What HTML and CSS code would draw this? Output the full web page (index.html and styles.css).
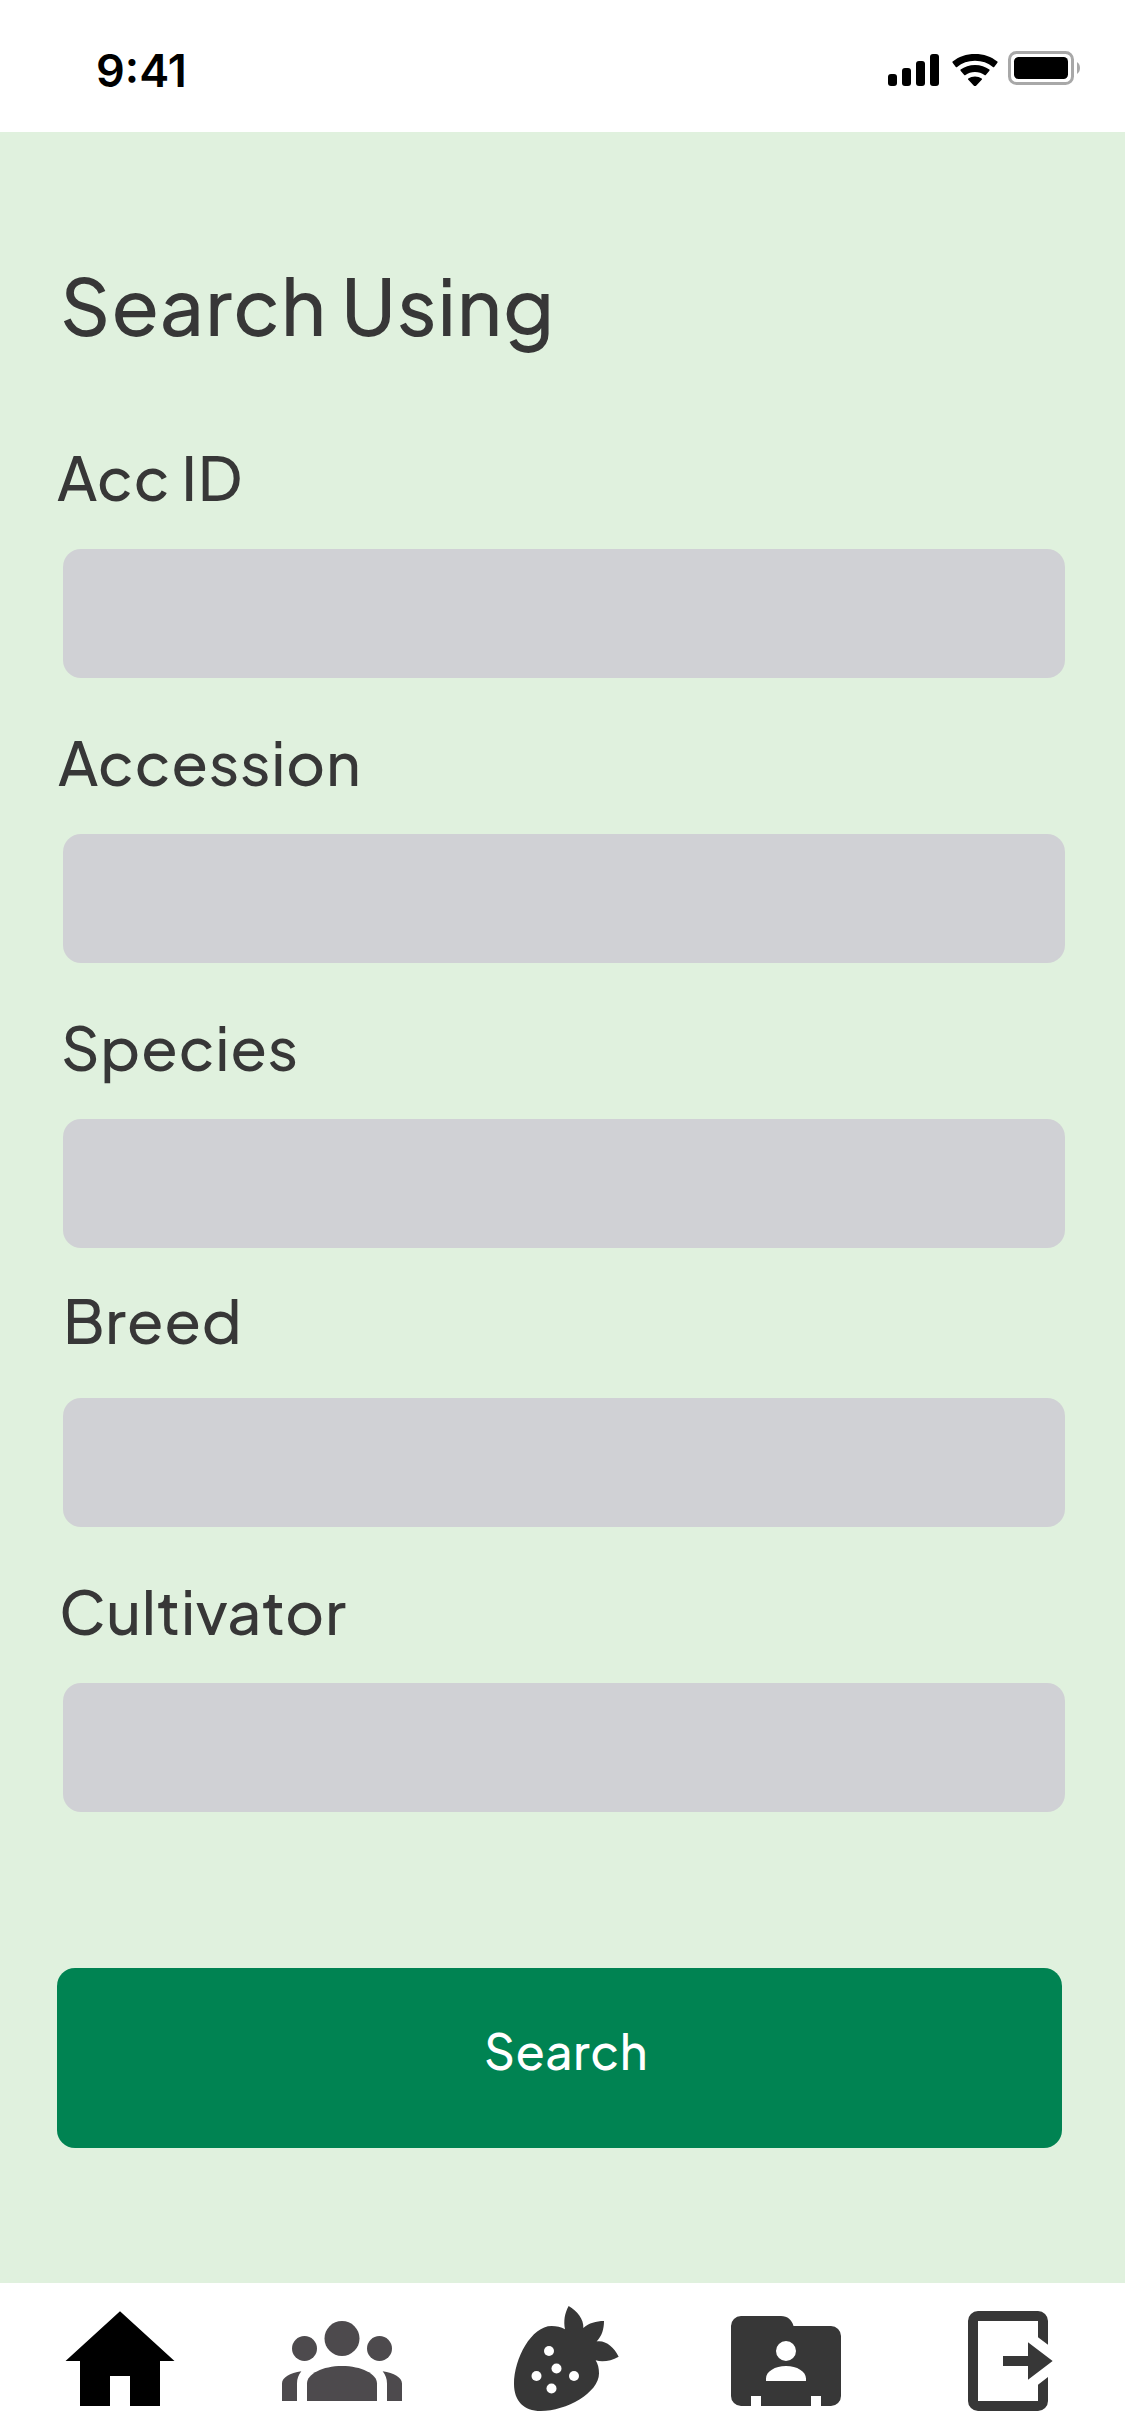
FILE: index.html
```
<!DOCTYPE html>
<html lang="en">
<head>
<meta charset="utf-8">
<title>Search Using</title>
<link rel="stylesheet" href="styles.css">
</head>
<body>
<div class="screen">
  <header class="status-bar">
    <span class="status-time">9:41</span>
    <svg class="status-icons" viewBox="0 0 192 36" aria-hidden="true">
      <rect x="0" y="24" width="9" height="12" rx="3"/>
      <rect x="14" y="18" width="9" height="18" rx="3"/>
      <rect x="28" y="11" width="9" height="25" rx="3"/>
      <rect x="42" y="4" width="9" height="32" rx="3"/>
      <path d="M64.6 12.8a1 1 0 0 1 0-1.2C70.600 6.500 78.300 3.900 87 3.900S103.400 6.500 109.400 11.600a1 1 0 0 1 0 1.200L106.200 17a1 1 0 0 1-1.300 0C100 12.900 94 10.700 87 10.700S74 12.900 69.100 17a1 1 0 0 1-1.300 0z"/>
      <path d="M72.600 20.800a1 1 0 0 1 0-1.200C76.500 16.500 81.500 14.900 87 14.900S97.500 16.500 101.400 19.600a1 1 0 0 1 0 1.200L97.800 25a1 1 0 0 1-1.300 0C93.800 23 90.700 22 87 22S80.200 23 77.500 25a1 1 0 0 1-1.300 0z"/>
      <path d="M80.300 29.800a.8.8 0 0 1 0-1.200C84 25.700 90 25.700 93.700 28.600a.8.8 0 0 1 0 1.200L87.600 36.300a.8.8 0 0 1-1.200 0z"/>
      <rect class="battery-shell" x="121.500" y="2.500" width="63" height="31" rx="7"/>
      <rect x="126" y="7" width="54" height="22" rx="4.500"/>
      <path class="battery-cap" d="M189 12c4 2.500 4 9.500 0 12z"/>
    </svg>
  </header>

  <main class="content">
    <h1 class="title">Search Using</h1>
    <form class="form">
      <div class="field">
        <label class="label" for="acc-id">Acc ID</label>
        <input class="input" id="acc-id" type="text">
      </div>
      <div class="field">
        <label class="label label-accession" for="accession">Accession</label>
        <input class="input" id="accession" type="text">
      </div>
      <div class="field field-species">
        <label class="label label-species" for="species">Species</label>
        <input class="input" id="species" type="text">
      </div>
      <div class="field field-breed">
        <label class="label label-breed" for="breed">Breed</label>
        <input class="input" id="breed" type="text">
      </div>
      <div class="field field-cultivator">
        <label class="label label-cultivator" for="cultivator">Cultivator</label>
        <input class="input" id="cultivator" type="text">
      </div>
      <button class="search-button" type="button">Search</button>
    </form>
  </main>

  <nav class="tab-bar">
    <a class="tab tab-home" aria-label="Home">
      <svg viewBox="0 0 24 24"><path d="M4 21V12H1.100L12 2.050l10.900 9.950H20v9h-6v-6h-4v6z"/></svg>
    </a>
    <a class="tab tab-people" aria-label="People">
      <svg viewBox="0 0 24 24">
        <circle cx="12" cy="7.500" r="3.500"/>
        <circle cx="4.500" cy="9.500" r="2.500"/>
        <circle cx="19.500" cy="9.500" r="2.500"/>
        <path d="M5 20v-3.500C5 14.570 8.130 13 12 13s7 1.570 7 3.500V20z"/>
        <path d="M0 20v-3.500c0-1.160 1.600-2.140 3.870-2.430C3.300 14.730 3 15.600 3 16.500V20z"/>
        <path d="M24 20v-3.500c0-1.160-1.600-2.140-3.870-2.430.570.660.870 1.530.870 2.430V20z"/>
      </svg>
    </a>
    <a class="tab" aria-label="Strawberries">
      <svg viewBox="0 0 24 24">
        <path d="M12.930 1C12.100 2.500 11.900 4 12.200 5.670 11.400 5.200 10.500 5 9.530 5 5.500 5 2 11.500 2 16.600 2 20 4 22 7.330 22 12.500 22 19 18.300 19 14.500 19 13.500 18.800 12.600 18.330 11.870c1.470.380 3.070.1 4.600-.740C22 9.200 20.300 7.800 18.530 8.100 19.600 7 20 5.600 20 4c-1.600 0-3 .4-4.130 1.400C16 3.600 14.600 2 12.930 1z"/>
        <g class="seeds">
          <circle cx="9" cy="10" r="1"/>
          <circle cx="10.500" cy="13.500" r="1"/>
          <circle cx="6.500" cy="15" r="1"/>
          <circle cx="14" cy="15" r="1"/>
          <circle cx="9.500" cy="17.500" r="1"/>
        </g>
      </svg>
    </a>
    <a class="tab" aria-label="Contacts">
      <svg viewBox="0 0 24 24"><path fill-rule="evenodd" d="M3 3h8c1.300 0 2.200.8 2.500 2H21a2 2 0 0 1 2 2v12a2 2 0 0 1-2 2h-2v-2h-2v2H7v-2H5v2H3a2 2 0 0 1-2-2V5a2 2 0 0 1 2-2zM12 8a2 2 0 1 0 0 4 2 2 0 0 0 0-4zM8 16h8v-.500c0-1.400-1.800-2.500-4-2.500s-4 1.100-4 2.500z"/></svg>
    </a>
    <a class="tab" aria-label="Log out">
      <svg viewBox="0 0 24 24"><path d="M20 8.730 18 7.270V4H6v16h12v-3.270l2-1.530V20a2 2 0 0 1-2 2H6a2 2 0 0 1-2-2V4a2 2 0 0 1 2-2h12a2 2 0 0 1 2 2z"/><path d="M11 11h5V8.270L20.930 12 16 15.730V13h-5z"/></svg>
    </a>
  </nav>
</div>
</body>
</html>
```
FILE: styles.css
```
* {
  box-sizing: border-box;
}

body {
  margin: 0;
  font-family: "Plus Jakarta Sans", Inter, sans-serif;
  font-weight: 500;
  color: #373737;
}

.screen {
  display: flex;
  flex-direction: column;
  width: 1125px;
  height: 2436px;
  background: #fff;
}

/* Status bar */
.status-bar {
  display: flex;
  align-items: flex-start;
  justify-content: space-between;
  height: 132px;
  padding: 43px 45px 0 96px;
  color: #000;
}

.status-time {
  font: 600 45px/55px Inter, sans-serif;
}

.status-icons {
  width: 192px;
  height: 36px;
  margin-top: 7px;
}

.battery-shell {
  fill: none;
  stroke: #a8a8a8;
  stroke-width: 3;
}

.battery-cap {
  fill: #a8a8a8;
}

/* Search form */
.content {
  flex: 1;
  padding: 123px 60px 0 57px;
  background: #e0f1de;
}

.title {
  margin: 0 0 86px 3px;
  font-size: 78px;
  font-weight: 500;
  line-height: 98px;
  letter-spacing: 0.01em;
}

.form,
.field {
  display: flex;
  flex-direction: column;
}

.field {
  gap: 35px;
  margin-bottom: 46px;
}

.field-species {
  margin-bottom: 34px;
}

.field-breed {
  gap: 41px;
}

.field-cultivator {
  margin-bottom: 156px;
}

.label {
  font-size: 60px;
  line-height: 75px;
  letter-spacing: 0.01em;
}

.label-accession {
  padding-left: 1px;
}

.label-species {
  padding-left: 4px;
}

.label-breed {
  padding-left: 6px;
}

.label-cultivator {
  padding-left: 2px;
}

.input {
  width: 1002px;
  height: 129px;
  margin: 0 0 0 6px;
  padding: 0 30px;
  border: 0;
  border-radius: 18px;
  background: #d0d1d5;
  font: inherit;
  font-size: 48px;
}

.search-button {
  width: 1005px;
  height: 180px;
  padding: 0 0 15px 13px;
  border: 0;
  border-radius: 18px;
  background: #008352;
  color: #fff;
  font: inherit;
  font-size: 48px;
  line-height: 61px;
  letter-spacing: 0.01em;
}

/* Tab bar */
.tab-bar {
  display: flex;
  justify-content: space-between;
  height: 153px;
  padding: 18px 57px 0 60px;
}

.tab {
  width: 120px;
  height: 120px;
  color: #373737;
}

.tab svg {
  display: block;
  width: 120px;
  height: 120px;
  fill: currentColor;
}

.tab-home {
  color: #000;
}

.tab-people {
  color: #4d4a4d;
}

.seeds {
  fill: #fff;
}
```
